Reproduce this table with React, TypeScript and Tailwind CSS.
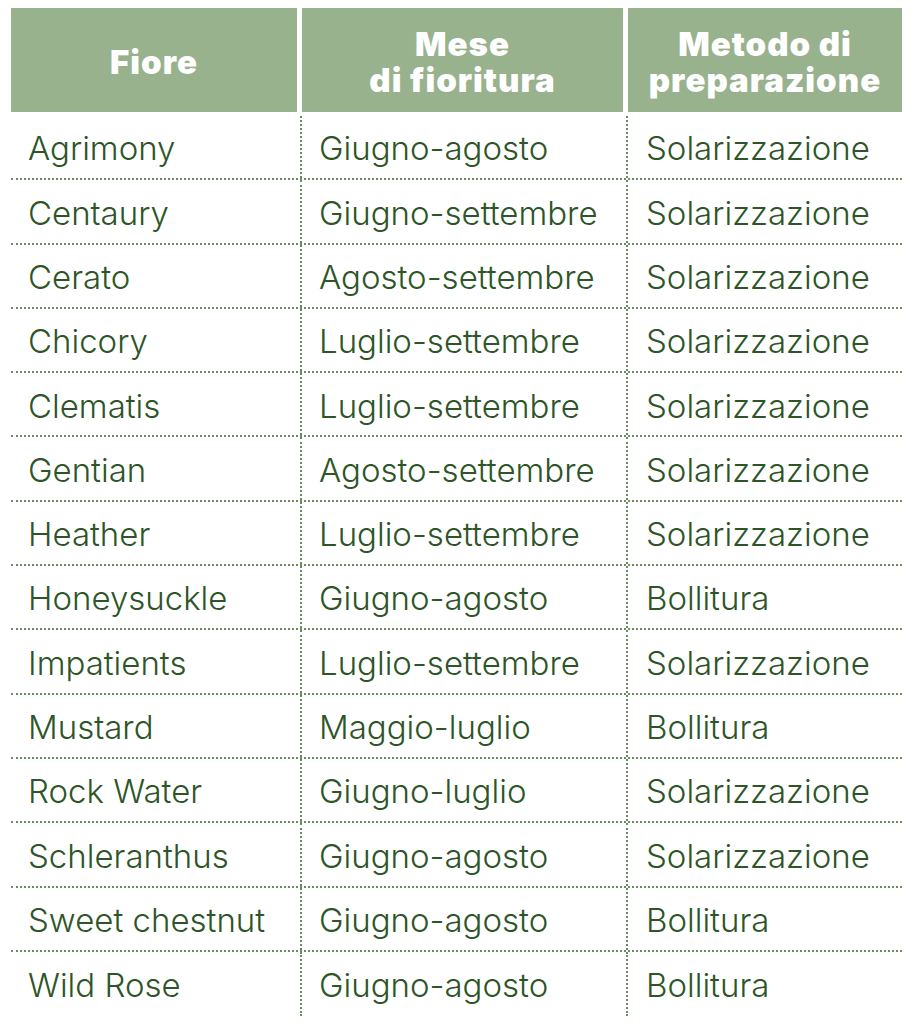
const rows: [string, string, string][] = [
  ["Agrimony", "Giugno-agosto", "Solarizzazione"],
  ["Centaury", "Giugno-settembre", "Solarizzazione"],
  ["Cerato", "Agosto-settembre", "Solarizzazione"],
  ["Chicory", "Luglio-settembre", "Solarizzazione"],
  ["Clematis", "Luglio-settembre", "Solarizzazione"],
  ["Gentian", "Agosto-settembre", "Solarizzazione"],
  ["Heather", "Luglio-settembre", "Solarizzazione"],
  ["Honeysuckle", "Giugno-agosto", "Bollitura"],
  ["Impatients", "Luglio-settembre", "Solarizzazione"],
  ["Mustard", "Maggio-luglio", "Bollitura"],
  ["Rock Water", "Giugno-luglio", "Solarizzazione"],
  ["Schleranthus", "Giugno-agosto", "Solarizzazione"],
  ["Sweet chestnut", "Giugno-agosto", "Bollitura"],
  ["Wild Rose", "Giugno-agosto", "Bollitura"],
];

export default function App() {
  return (
    <div className="w-[916px] h-[1032px] bg-white pt-2 pl-[11px] font-['Inter',sans-serif]">
      {/* header */}
      <div className="flex gap-[5px] h-[104px] w-[891px] text-white font-black text-[33px] tracking-[1px] leading-[36px] text-center">
        <div className="w-[286px] bg-[#98b28e] flex items-center justify-center pt-1">Fiore</div>
        <div className="w-[321px] bg-[#98b28e] flex items-center justify-center pt-1">
          Mese
          <br />
          di fioritura
        </div>
        <div className="w-[274px] bg-[#98b28e] flex items-center justify-center pt-1">
          Metodo di
          <br />
          preparazione
        </div>
      </div>

      {/* body */}
      <div className="mt-1 w-[891px] text-[#2d5527] text-[33px] font-light">
        {rows.map(([fiore, mese, metodo], i) => (
          <div
            key={fiore}
            className={
              "grid grid-cols-[289px_326px_276px] h-[64.3px] " +
              (i < rows.length - 1 ? "border-b-2 border-dotted border-[#6b8a62]" : "")
            }
          >
            <div className="flex items-center pl-[17px] pt-1">{fiore}</div>
            <div className="flex items-center pl-[17px] pt-1 border-l-2 border-dotted border-[#6b8a62]">{mese}</div>
            <div className="flex items-center pl-[18px] pt-1 border-l-2 border-dotted border-[#6b8a62]">{metodo}</div>
          </div>
        ))}
      </div>
    </div>
  );
}
